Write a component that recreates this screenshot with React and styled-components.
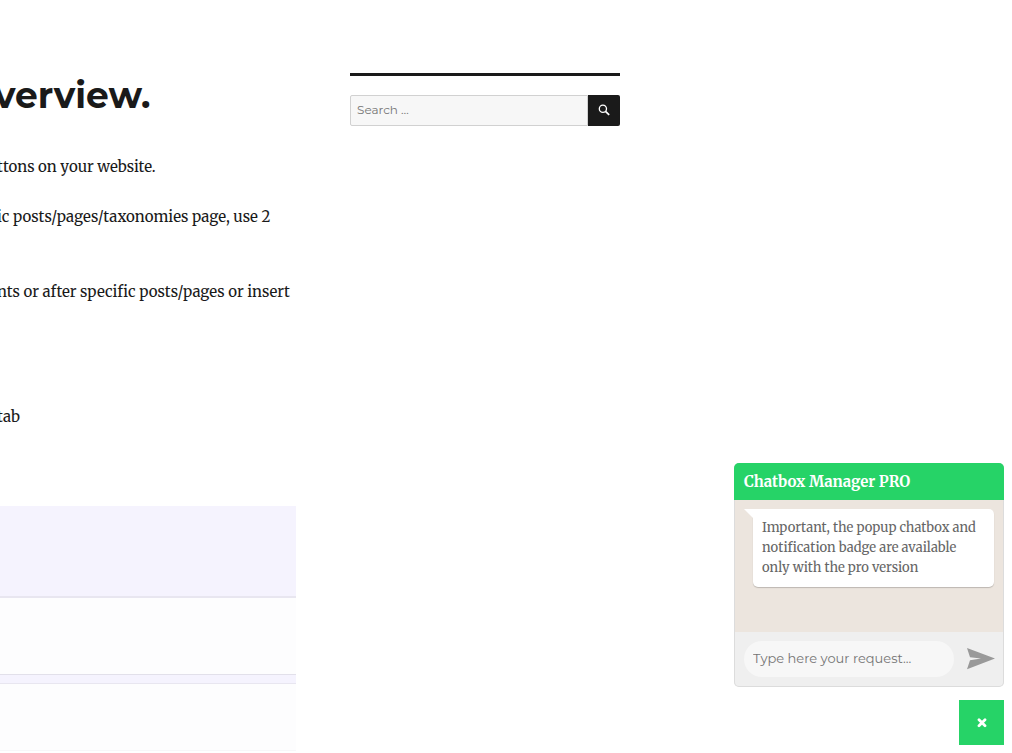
import React from "react";
import styled, { createGlobalStyle } from "styled-components";

const serif = `Merriweather, "DejaVu Serif Condensed", "DejaVu Serif", serif`;
const sans = `Montserrat, Inter, "Open Sans", sans-serif`;

const GlobalStyle = createGlobalStyle`
  *, *::before, *::after { box-sizing: border-box; }
  body { margin: 0; background: #fff; color: #1a1a1a; font-family: ${serif}; }
  button, input { font: inherit; border: 0; padding: 0; margin: 0; outline: 0; }
  button { cursor: pointer; }
`;

const Page = styled.div`
  display: grid;
  grid-template-columns: 296fr 270fr 338fr;
  column-gap: 54px;
  align-items: start;
  padding-top: 73px;
`;

const Title = styled.h1`
  margin: 0 0 36px;
  text-indent: -6px;
  font: 700 36px/45px ${sans};
`;

const Paragraph = styled.p`
  margin: 0 0 25px;
  min-height: ${(p) => (p.$lines || 1) * 25}px;
  text-indent: -3px;
  font-size: 15px;
  line-height: 25px;
  white-space: nowrap;
`;

const Preview = styled.div`
  margin-top: 77px;
  background: #f5f3fe;
  padding-top: 90px;
  display: grid;
  row-gap: 8px;
`;

const PreviewPanel = styled.div`
  height: ${(p) => p.$height}px;
  background: #fdfdfe;
  border-top: ${(p) => p.$top}px solid #e8e6f0;
  border-bottom: 1px solid ${(p) => p.$edge};
`;

const Sidebar = styled.aside`
  border-top: 3px solid #1a1a1a;
  padding-top: 19px;
`;

const SearchForm = styled.form`
  display: flex;
  height: 31px;
`;

const SearchInput = styled.input`
  flex: 1;
  min-width: 0;
  padding: 0 6px 1px;
  background: #f7f7f7;
  border: 1px solid #d1d1d1;
  border-radius: 2px 0 0 2px;
  font: 400 12px/20px ${sans};
  &::placeholder { color: #757575; opacity: 1; }
`;

const SearchButton = styled.button`
  display: grid;
  place-items: center;
  width: 32px;
  padding-bottom: 1px;
  background: #1a1a1a;
  color: #fff;
  border-radius: 0 2px 2px 0;
`;

const Widget = styled.div`
  position: fixed;
  right: 8px;
  bottom: 8px;
  display: flex;
  flex-direction: column;
  align-items: flex-end;
  gap: 13px;
`;

const ChatBox = styled.section`
  width: 270px;
  border-radius: 5px;
  background: #efefef;
  box-shadow: inset 0 0 0 1px #dcdcdc;
  overflow: hidden;
`;

const ChatHeader = styled.h2`
  margin: 0;
  padding: 6px 10px;
  background: #26d367;
  color: #fff;
  font-size: 15px;
  line-height: 25px;
  white-space: nowrap;
`;

const ChatBody = styled.div`
  margin: 0 1px;
  padding: 9px 9px 45px 18px;
  background: #ece5de;
`;

const Bubble = styled.p`
  position: relative;
  margin: 0;
  padding: 9px;
  background: #fff;
  color: #666;
  border-radius: 0 5px 5px 5px;
  box-shadow: 0 1px 1px rgba(0, 0, 0, 0.2);
  font-size: 13px;
  line-height: 20px;
  &::before {
    content: "";
    position: absolute;
    top: 0;
    left: -9px;
    border-top: 9px solid #fff;
    border-left: 9px solid transparent;
  }
`;

const Line = styled.span`
  display: block;
  white-space: nowrap;
`;

const ChatForm = styled.form`
  display: flex;
  align-items: center;
  justify-content: space-between;
  padding: 9px 9px 10px 10px;
`;

const ChatInput = styled.input`
  width: 210px;
  height: 36px;
  padding: 0 9px 2px;
  border-radius: 18px;
  background: #f7f7f7;
  font: 400 13px/20px ${sans};
  &::placeholder { color: #757575; opacity: 1; }
`;

const SendButton = styled.button`
  display: grid;
  place-items: center;
  background: transparent;
  color: #999;
`;

const CloseButton = styled.button`
  display: grid;
  place-items: center;
  width: 45px;
  height: 45px;
  background: #26d367;
  color: #fff;
`;

export default function App() {
  const stop = (e) => e.preventDefault();
  return (
    <>
      <GlobalStyle />
      <Page>
        <main>
          <Title>verview.</Title>
          <Paragraph>ttons on your website.</Paragraph>
          <Paragraph $lines={2}>ic posts/pages/taxonomies page, use 2</Paragraph>
          <Paragraph $lines={4}>nts or after specific posts/pages or insert</Paragraph>
          <Paragraph>tab</Paragraph>
          <Preview>
            <PreviewPanel $height={79} $top={2} $edge="#e2e0ea" />
            <PreviewPanel $height={68} $top={1} $edge="#f7f7f9" />
          </Preview>
        </main>
        <Sidebar>
          <SearchForm onSubmit={stop}>
            <SearchInput type="search" aria-label="Search" placeholder="Search …" />
            <SearchButton type="submit" aria-label="Search">
              <svg width="12" height="12" viewBox="0 0 12 12" fill="none" stroke="currentColor">
                <circle cx="4.9" cy="4.7" r="3.6" strokeWidth="1.3" />
                <path d="M7.5 7.3 11.2 10.9" strokeWidth="1.7" />
              </svg>
            </SearchButton>
          </SearchForm>
        </Sidebar>
      </Page>
      <Widget>
        <ChatBox>
          <ChatHeader>Chatbox Manager PRO</ChatHeader>
          <ChatBody>
            <Bubble>
              <Line>Important, the popup chatbox and</Line>
              <Line>notification badge are available</Line>
              <Line>only with the pro version</Line>
            </Bubble>
          </ChatBody>
          <ChatForm onSubmit={stop}>
            <ChatInput type="text" aria-label="Your request" placeholder="Type here your request..." />
            <SendButton type="submit" aria-label="Send">
              <svg width="28" height="22" viewBox="0 0 28 22" fill="currentColor">
                <path d="M0 0 28 10.5 0 21.3 3 12.2 14 10.6 3 9.2Z" />
              </svg>
            </SendButton>
          </ChatForm>
        </ChatBox>
        <CloseButton type="button" aria-label="Close">
          <svg width="10" height="10" viewBox="0 0 10 10" stroke="currentColor" strokeWidth="2.8" strokeLinecap="round">
            <path d="M2 1.8l6 6M8 1.8l-6 6" />
          </svg>
        </CloseButton>
      </Widget>
    </>
  );
}
